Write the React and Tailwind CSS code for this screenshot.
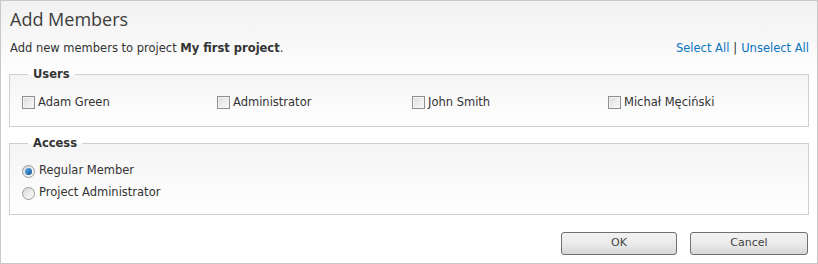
import React, { useState } from 'react';

var USERS = ['Adam Green', 'Administrator', 'John Smith', 'Michał Męciński'];
var ACCESS = ['Regular Member', 'Project Administrator'];

function CheckBox(props) {
  return (
    <span
      className="inline-block w-[13px] h-[13px] border border-[#8f8f8f] bg-gradient-to-br from-[#dcdcdc] to-[#fbfbfb] shadow-[inset_0_0_0_1px_#f4f4f4] mr-[3px] shrink-0"
      onClick={props.onClick}
    >
      {props.checked && (
        <svg viewBox="0 0 11 11" className="w-[11px] h-[11px]">
          <path d="M2 5.5l2.5 2.5 4.5-5" fill="none" stroke="#333" strokeWidth="1.6" />
        </svg>
      )}
    </span>
  );
}

function Radio(props) {
  return (
    <span
      className="inline-flex items-center justify-center w-[13px] h-[13px] rounded-full border border-[#9a9a9a] bg-gradient-to-br from-[#d8d8d8] to-[#fdfdfd] mr-[4px] shrink-0"
      onClick={props.onClick}
    >
      {props.checked && (
        <span className="block w-[7px] h-[7px] rounded-full bg-gradient-to-br from-[#5fb4ef] to-[#0b4f93]"></span>
      )}
    </span>
  );
}

export default function App() {
  var [checked, setChecked] = useState({});
  var [access, setAccess] = useState(0);

  function toggle(name) {
    var next = Object.assign({}, checked);
    next[name] = !next[name];
    setChecked(next);
  }

  function setAll(value) {
    var next = {};
    USERS.forEach(function(u) { next[u] = value; });
    setChecked(next);
  }

  return (
    <div
      className="w-[818px] h-[264px] border border-[#c8c8c8] bg-gradient-to-b from-[#f1f1f1] via-white via-[30%] to-white text-[#333] text-[11.5px] flex flex-col"
      style={{ fontFamily: '"DejaVu Sans", Verdana, sans-serif' }}
    >
      <h1
        className="text-[18px] leading-none text-[#3c3c3c] pl-[9px] pt-[9px] h-[37px]"
        style={{ fontFamily: '"Open Sans", "Noto Sans", sans-serif' }}
      >
        Add Members
      </h1>

      <div className="flex items-center justify-between pl-[9px] pr-[8px] h-[22px]">
        <div>
          Add new members to project <b>My first project</b>.
        </div>
        <div className="text-[#0a73c0]">
          <a href="#" className="hover:underline" onClick={function(e) { e.preventDefault(); setAll(true); }}>Select All</a>
          <span className="text-[#333] mx-[4px]">|</span>
          <a href="#" className="hover:underline" onClick={function(e) { e.preventDefault(); setAll(false); }}>Unselect All</a>
        </div>
      </div>

      <fieldset className="mx-[8px] mt-[6px] border border-[#cfcfcf] bg-gradient-to-b from-[#f4f4f4] to-white px-[12px] pt-[11px] pb-[15px]">
        <legend className="font-bold ml-[6px] px-[5px] text-[#333]">Users</legend>
        <div className="grid grid-cols-[195px_195px_196px_1fr]">
          {USERS.map(function(u) {
            return (
              <label key={u} className="flex items-center h-[17px] cursor-pointer">
                <CheckBox checked={!!checked[u]} onClick={function() { toggle(u); }} />
                <span onClick={function() { toggle(u); }}>{u}</span>
              </label>
            );
          })}
        </div>
      </fieldset>

      <fieldset className="mx-[8px] mt-[8px] border border-[#cfcfcf] bg-gradient-to-b from-[#f4f4f4] to-white px-[12px] pt-[10px] pb-[12px]">
        <legend className="font-bold ml-[6px] px-[5px] text-[#333]">Access</legend>
        <div className="flex flex-col gap-[5px]">
          {ACCESS.map(function(a, i) {
            return (
              <label key={a} className="flex items-center h-[17px] cursor-pointer" onClick={function() { setAccess(i); }}>
                <Radio checked={access === i} />
                <span>{a}</span>
              </label>
            );
          })}
        </div>
      </fieldset>

      <div className="flex justify-end gap-[13px] pr-[9px] mt-[17px]">
        <button className="w-[116px] h-[23px] rounded-[3px] border border-[#707070] bg-gradient-to-b from-[#f2f2f2] via-[#ebebeb] to-[#d6d6d6] text-[#444] text-[11px]">
          OK
        </button>
        <button className="w-[118px] h-[23px] rounded-[3px] border border-[#707070] bg-gradient-to-b from-[#f2f2f2] via-[#ebebeb] to-[#d6d6d6] text-[#444] text-[11px]">
          Cancel
        </button>
      </div>
    </div>
  );
}
